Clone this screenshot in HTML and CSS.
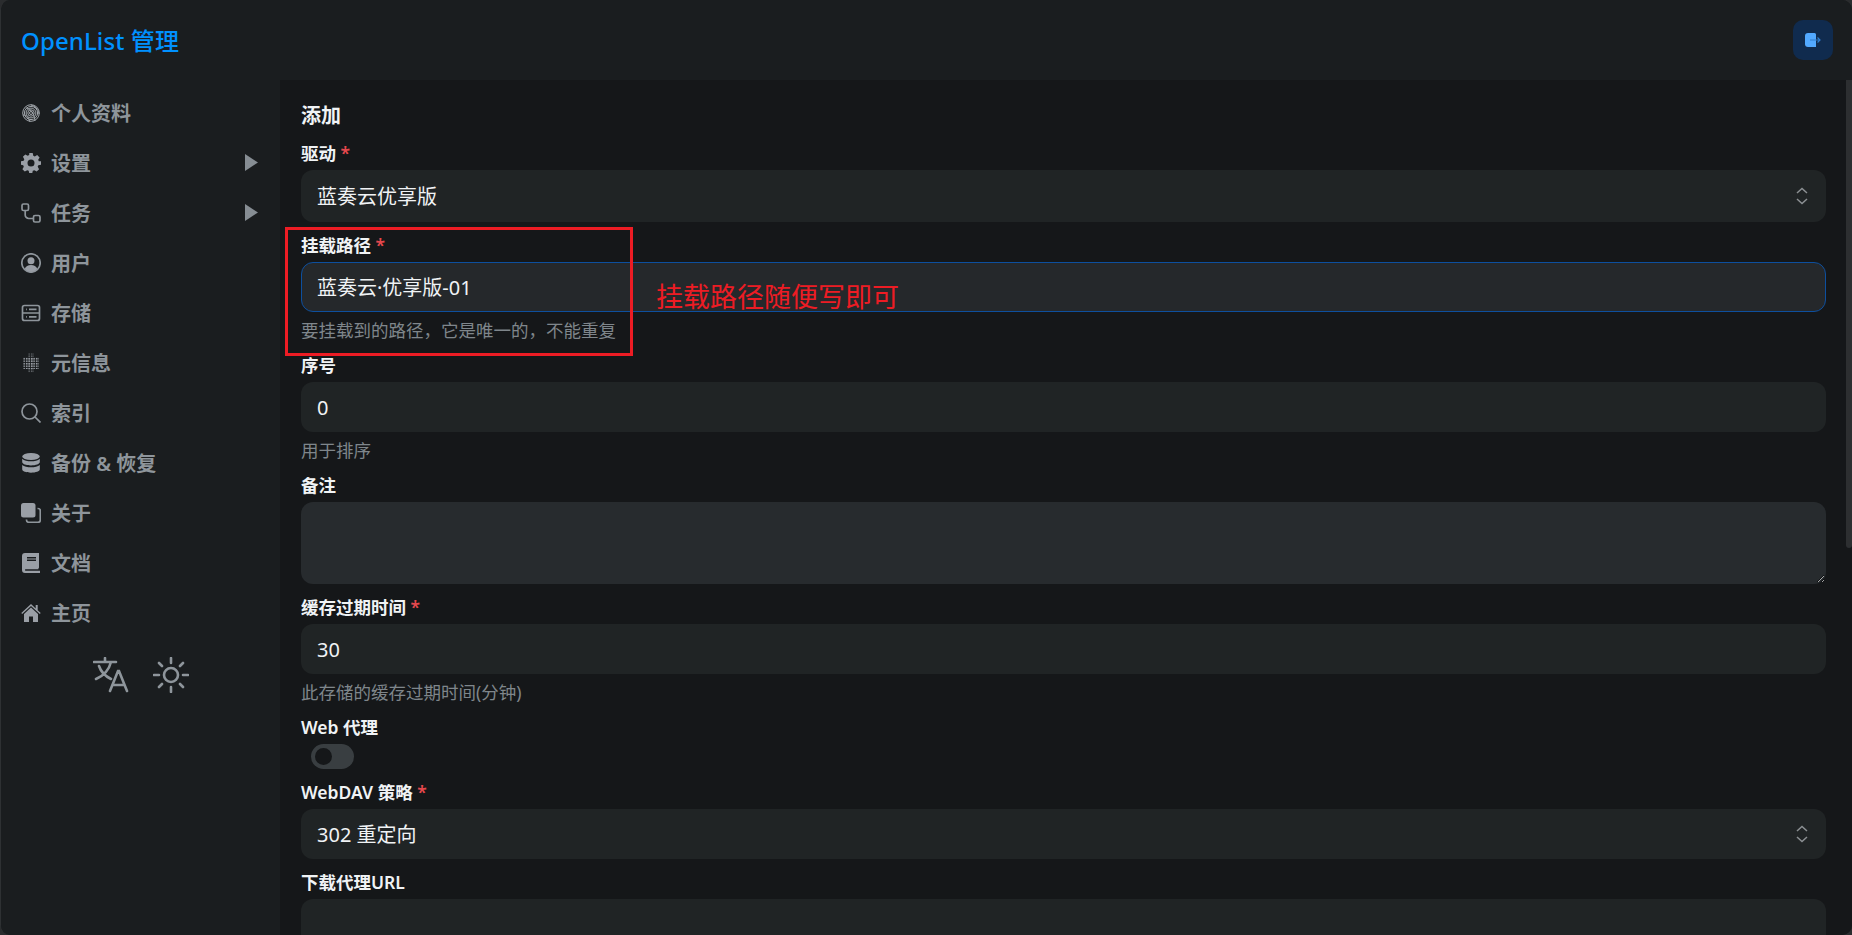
FILE: index.html
```html
<!DOCTYPE html>
<html lang="zh-CN">
<head>
  <meta charset="UTF-8" />
  <meta name="viewport" content="width=device-width, initial-scale=1.0"/>
  <title>OpenList 管理</title>
  <link rel="stylesheet" href="styles.css">
</head>
<body>
  <div class="app">
    <header class="topbar">
      <h1 class="brand">OpenList 管理</h1>
      <button class="logout" aria-label="退出">
        <svg viewBox="0 0 16 14" width="16" height="14">
          <path class="logout-door" d="M3 0h6.500A1.500 1.500 0 0 1 11 1.500V14H3a3 3 0 0 1-3-3V3a3 3 0 0 1 3-3z"/>
          <path class="logout-arrow" d="M5 7h10M12.500 4.500 15 7l-2.500 2.500"/>
        </svg>
      </button>
    </header>

    <div class="layout">
      <nav class="sidebar">
        <a class="nav-item">
          <svg class="nav-icon line thin" viewBox="0 0 20 20">
            <circle cx="10" cy="10" r="1.500"/><circle cx="10" cy="10" r="3.200"/><circle cx="10" cy="10" r="4.900"/><circle cx="10" cy="10" r="6.600"/><circle cx="10" cy="10" r="8.300"/>
            <path d="M2 12c4 0 6 3 7 7M5 5c5 1 8 5 9 13M10 2c4 1 7 4 8 9"/>
          </svg>
          <span>个人资料</span>
        </a>
        <a class="nav-item">
          <svg class="nav-icon solid" viewBox="0 0 20 20">
            <path fill-rule="evenodd" d="M8.300 0h3.400l.6 2.700 1.500.7 2.400-1.400 2.400 2.400-1.400 2.400.6 1.500L20 8.300v3.400l-2.700.6-.6 1.500 1.400 2.400-2.400 2.400-2.400-1.400-1.500.6-.6 2.700H8.300l-.6-2.700-1.500-.6-2.400 1.400-2.400-2.400 1.400-2.400-.6-1.500L0 11.700V8.300l2.700-.6.6-1.500-1.400-2.400 2.400-2.400 2.400 1.400 1.500-.7zM10 6.500a3.500 3.500 0 1 0 0 7 3.500 3.500 0 0 0 0-7z"/>
          </svg>
          <span>设置</span>
          <svg class="nav-arrow" viewBox="0 0 13 17"><path d="M0 0l13 8.500L0 17z"/></svg>
        </a>
        <a class="nav-item">
          <svg class="nav-icon line" viewBox="0 0 20 20">
            <rect x="1" y="1" width="6.500" height="6.500" rx="1.500"/><rect x="12.500" y="12.500" width="6.500" height="6.500" rx="1.500"/>
            <path d="M4.200 7.500v4.500a3.500 3.500 0 0 0 3.500 3.500h4.800"/>
          </svg>
          <span>任务</span>
          <svg class="nav-arrow" viewBox="0 0 13 17"><path d="M0 0l13 8.500L0 17z"/></svg>
        </a>
        <a class="nav-item">
          <svg class="nav-icon" viewBox="0 0 20 20">
            <circle class="ring" cx="10" cy="10" r="9.200"/>
            <circle class="fill" cx="10" cy="7.700" r="3.500"/>
            <path class="fill" d="M3.600 16c1-2.800 3.400-4 6.400-4s5.400 1.200 6.400 4A9 9 0 0 1 10 19a9 9 0 0 1-6.400-3z"/>
          </svg>
          <span>用户</span>
        </a>
        <a class="nav-item">
          <svg class="nav-icon line" viewBox="0 0 20 20">
            <rect x="1.500" y="2.500" width="17" height="15" rx="2"/>
            <path d="M1.500 10h17M5 6.300h.8M8 6.300h7.500M5 13.800h.8M8 13.800h7.500"/>
          </svg>
          <span>存储</span>
        </a>
        <a class="nav-item">
          <svg class="nav-icon" viewBox="0 0 20 20">
            <defs>
              <pattern id="dots" width="2.500" height="2.500" patternUnits="userSpaceOnUse">
                <rect width="1.500" height="1.500" class="fill"/>
              </pattern>
            </defs>
            <rect x="2" y="4" width="16" height="12" fill="url(#dots)"/>
            <rect x="7" y="0.500" width="6" height="19" fill="url(#dots)" opacity="0.600"/>
          </svg>
          <span>元信息</span>
        </a>
        <a class="nav-item">
          <svg class="nav-icon line" viewBox="0 0 20 20">
            <circle cx="8.500" cy="8.500" r="7.500"/><path d="M14 14l5.500 5.500"/>
          </svg>
          <span>索引</span>
        </a>
        <a class="nav-item">
          <svg class="nav-icon solid" viewBox="0 0 20 20">
            <ellipse cx="10" cy="3.500" rx="8.800" ry="3.500"/>
            <path d="M1.200 5.800C3 7.700 6.500 8.300 10 8.300s7-.6 8.800-2.500V9c0 2-4 3.400-8.800 3.400S1.200 11 1.200 9z"/>
            <path d="M1.200 12c1.800 1.800 5.300 2.300 8.800 2.300s7-.5 8.800-2.300v4.300c0 2-4 3.400-8.800 3.400s-8.800-1.400-8.800-3.400z"/>
          </svg>
          <span>备份 &amp; 恢复</span>
        </a>
        <a class="nav-item">
          <svg class="nav-icon" viewBox="0 0 20 20">
            <rect class="fill" x="0" y="0" width="14.500" height="14.500" rx="2.500"/>
            <path class="ring" d="M16.500 5.500h.5A2.300 2.300 0 0 1 19.300 7.800V17a2.300 2.300 0 0 1-2.300 2.300H7.500A2.300 2.300 0 0 1 5.500 17v-.5"/>
          </svg>
          <span>关于</span>
        </a>
        <a class="nav-item">
          <svg class="nav-icon solid" viewBox="0 0 20 20">
            <path fill-rule="evenodd" d="M4 0h14v14.800c-.6.400-.6 1-.6 1.400h-13a1 1 0 0 0 0 1.600h14.600V20H4a3 3 0 0 1-3-3V3a3 3 0 0 1 3-3zm2 4v1.500h9V4zm0 2.500V8h9V6.500z"/>
          </svg>
          <span>文档</span>
        </a>
        <a class="nav-item">
          <svg class="nav-icon solid" viewBox="0 0 20 20">
            <path d="M10 1 0.300 10l.9 1L10 3l8.800 8 .9-1-3-2.800V2h-2v3.400z"/>
            <path d="M10 4.500 3 11v8h5v-5.500h4V19h5v-8z"/>
          </svg>
          <span>主页</span>
        </a>
        <div class="nav-tools">
          <svg class="tool-icon" viewBox="0 0 36 36">
            <path d="M1 5h22M12 1v4M18 5c-2 8-8 14-15 17M6 9c2 6 6 10 12 13M17 34l8-20h1l8 20M20 28h11"/>
          </svg>
          <svg class="tool-icon" viewBox="0 0 36 36">
            <circle cx="18" cy="18" r="7"/>
            <path d="M18 1v5M18 30v5M1 18h5M30 18h5M6 6l3 3M27 27l3 3M6 30l3-3M27 9l3-3"/>
          </svg>
        </div>
      </nav>

      <main class="main">
        <h2 class="page-title">添加</h2>
        <form class="form">
          <div class="field">
            <label class="form-label">驱动 <em>*</em></label>
            <div class="form-control select tall">
              <span>蓝奏云优享版</span>
              <svg class="chevrons" viewBox="0 0 14 18"><path d="M2 6l5-4.500L12 6M2 12l5 4.500L12 12"/></svg>
            </div>
          </div>
          <div class="field">
            <label class="form-label">挂载路径 <em>*</em></label>
            <input class="form-control focused" type="text" value="蓝奏云·优享版-01" />
            <p class="form-help">要挂载到的路径，它是唯一的，不能重复</p>
          </div>
          <div class="field">
            <label class="form-label">序号</label>
            <input class="form-control" type="text" value="0" />
            <p class="form-help">用于排序</p>
          </div>
          <div class="field">
            <label class="form-label">备注</label>
            <textarea class="form-control area"></textarea>
          </div>
          <div class="field">
            <label class="form-label">缓存过期时间 <em>*</em></label>
            <input class="form-control" type="text" value="30" />
            <p class="form-help">此存储的缓存过期时间(分钟)</p>
          </div>
          <div class="field">
            <label class="form-label">Web 代理</label>
            <div class="switch"><span class="knob"></span></div>
          </div>
          <div class="field">
            <label class="form-label">WebDAV 策略 <em>*</em></label>
            <div class="form-control select">
              <span>302 重定向</span>
              <svg class="chevrons" viewBox="0 0 14 18"><path d="M2 6l5-4.500L12 6M2 12l5 4.500L12 12"/></svg>
            </div>
          </div>
          <div class="field">
            <label class="form-label">下载代理URL</label>
            <input class="form-control" type="text" />
          </div>
        </form>

        <div class="mark-box"></div>
        <div class="mark-note">挂载路径随便写即可</div>
        <div class="scroll-thumb"></div>
      </main>
    </div>
  </div>
</body>
</html>
```

FILE: styles.css
```css
html, body {
  height: 100%;
  margin: 0;
  overflow: hidden;
}

body {
  font-family: "Noto Sans", "Noto Sans CJK SC", sans-serif;
  background-color: #2a2c2e;
  color: #f0f3f5;
}

.app {
  height: 935px;
  box-sizing: border-box;
  border-left: 1px solid #2e3133;
  border-radius: 10px;
  overflow: hidden;
  display: flex;
  flex-direction: column;
  background-color: #1a1d1f;
}

/* top bar */
.topbar {
  height: 80px;
  flex: none;
  display: flex;
  align-items: center;
  justify-content: space-between;
  padding: 0 19px 0 20px;
  background-color: #1a1d1f;
}

.brand {
  margin: 0 0 2px;
  font-size: 24px;
  font-weight: 500;
  letter-spacing: 0.100px;
  color: #0091ff;
}

.logout {
  width: 40px;
  height: 40px;
  padding: 0;
  border: none;
  border-radius: 10px;
  background-color: #102b4e;
  display: flex;
  align-items: center;
  justify-content: center;
}

.logout-door {
  fill: #52a9ff;
}

.logout-arrow {
  fill: none;
  stroke: #2f7dcc;
  stroke-width: 1.200;
}

/* sidebar */
.layout {
  flex: 1;
  min-height: 0;
  display: flex;
}

.sidebar {
  width: 279px;
  flex: none;
  box-sizing: border-box;
  padding-top: 8px;
  background-color: #1a1d1f;
}

.nav-item {
  height: 50px;
  display: flex;
  align-items: center;
  gap: 10px;
  padding: 0 22px 0 20px;
  font-size: 20px;
  font-weight: 600;
  color: #8e959b;
}

.nav-item span {
  flex: 1;
  margin-top: -1px;
}

.nav-icon {
  width: 20px;
  height: 20px;
  flex: none;
}

.nav-icon.solid,
.nav-icon .fill,
.nav-arrow {
  fill: #9a9fa6;
}

.nav-icon.line,
.nav-icon .ring {
  fill: none;
  stroke: #8e959b;
  stroke-width: 1.700;
}

.nav-icon.thin {
  stroke-width: 1;
  stroke: #a0a5aa;
}

.nav-arrow {
  width: 13px;
  height: 17px;
  flex: none;
  margin-top: -1px;
  fill: #868d93;
}

.nav-tools {
  display: flex;
  justify-content: center;
  gap: 24px;
  padding: 19px 0 0 1px;
}

.tool-icon {
  width: 36px;
  height: 36px;
  fill: none;
  stroke: #8e959b;
  stroke-width: 2.600;
  stroke-linecap: round;
}

/* main form */
.main {
  flex: 1;
  min-width: 0;
  position: relative;
  overflow: hidden;
  box-sizing: border-box;
  padding: 22px 26px 0 21px;
  background-color: #151719;
}

.page-title {
  margin: 0 0 10px;
  font-size: 20px;
  line-height: 28px;
  font-weight: 700;
}

.form {
  display: flex;
  flex-direction: column;
  gap: 10px;
}

.form-label {
  display: block;
  height: 26px;
  margin-bottom: 4px;
  font-size: 17.500px;
  line-height: 26px;
  font-weight: 600;
}

.form-label em {
  font-style: normal;
  color: #e5484d;
}

.form-control {
  display: block;
  width: 100%;
  height: 50px;
  box-sizing: border-box;
  padding: 0 15px;
  border: 1px solid transparent;
  border-radius: 12px;
  background-color: #202425;
  color: #f0f3f5;
  font-family: inherit;
  font-size: 20px;
  outline: none;
}

.form-control.tall {
  height: 52px;
}

.form-control.focused {
  padding-bottom: 2px;
  border-color: #0d4f9e;
  background-color: #25282b;
}

.form-control.area {
  height: 82px;
  background-color: #272b2e;
  resize: vertical;
  color-scheme: dark;
}

.select {
  display: flex;
  align-items: center;
  justify-content: space-between;
  padding-right: 16px;
}

.select span {
  margin-top: -2px;
}

.chevrons {
  width: 14px;
  height: 18px;
  fill: none;
  stroke: #8b8f92;
  stroke-width: 1.500;
}

.form-help {
  margin: 7px 0 1px;
  font-size: 17.500px;
  line-height: 22px;
  color: #7f868b;
}

.switch {
  width: 43px;
  height: 25px;
  margin-left: 10px;
  box-sizing: border-box;
  padding: 4px;
  border-radius: 13px;
  background-color: #393e41;
}

.knob {
  display: block;
  width: 17px;
  height: 17px;
  border-radius: 50%;
  background-color: #151719;
}

/* red annotation drawn over the screenshot */
.mark-box {
  position: absolute;
  left: 5px;
  top: 147px;
  width: 342px;
  height: 123px;
  border: 3px solid #ed1c24;
}

.mark-note {
  position: absolute;
  left: 376px;
  top: 197px;
  font-size: 27px;
  line-height: 40px;
  color: #ed1c24;
}

.scroll-thumb {
  position: absolute;
  right: 0;
  top: 0;
  width: 6px;
  height: 468px;
  border-radius: 0 0 3px 3px;
  background-color: #2d2f31;
}
```
